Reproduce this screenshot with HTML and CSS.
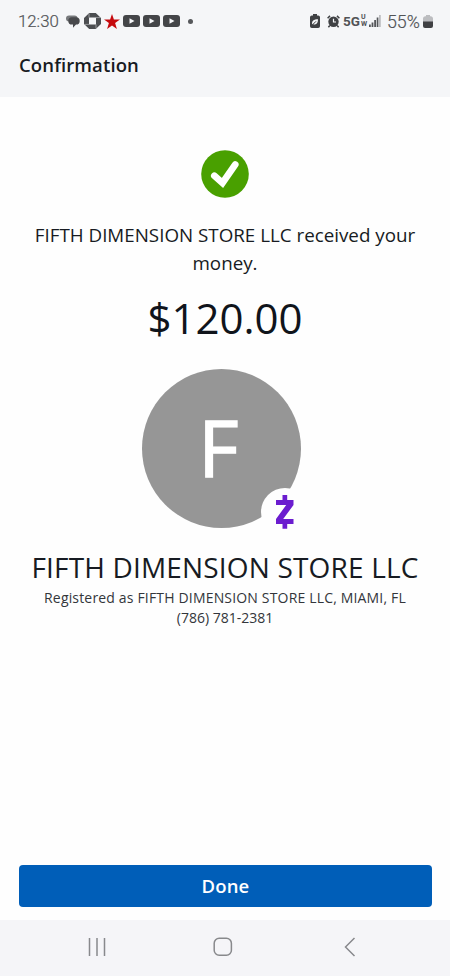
FILE: index.html
```html
<!DOCTYPE html>
<html lang="en">
<head>
<meta charset="utf-8">
<title>Confirmation</title>
<link rel="stylesheet" href="styles.css">
</head>
<body>
<div class="screen">
  <header class="header">
    <div class="status">
      <span class="time">12:30</span>
      <svg class="i-chat" width="14" height="13" viewBox="0 0 14 13"><rect x="0" y=".5" width="11.500" height="6" rx="3" fill="#77797c"/><path d="M6 2.200h4a3.700 3.700 0 0 1 0 7.400L7 12.800V9.600H6a3.700 3.700 0 0 1 0-7.400Z" fill="#48494c"/></svg>
      <svg class="i-bank" width="17" height="16" viewBox="0 0 17 16"><path d="M5.200 0h6.600L17 5v6l-5.200 5H5.200L0 11V5ZM5 4.600v6.800h7V4.600Z" fill="#4c4e51" fill-rule="evenodd"/><path d="M5 .5v4.100M12 4.600h4.500M12 11.400v4.100M.5 11.400H5" stroke="#b9babd" stroke-width=".7"/></svg>
      <svg class="i-star" width="16" height="15" viewBox="0 0 16 15"><path d="M8 0l1.900 5.500H16l-4.900 3.600L12.900 15 8 11.400 3.100 15l1.800-5.900L0 5.500h6.100Z" fill="#c50a0e"/></svg>
      <svg class="i-tube" width="17" height="12" viewBox="0 0 17 12"><rect width="17" height="12" rx="3" fill="#444548"/><path d="M6.500 3.300v5.400L11.500 6Z" fill="#f5f6f8"/></svg>
      <svg class="i-tube" width="17" height="12" viewBox="0 0 17 12"><rect width="17" height="12" rx="3" fill="#444548"/><path d="M6.500 3.300v5.400L11.500 6Z" fill="#f5f6f8"/></svg>
      <svg class="i-tube" width="17" height="12" viewBox="0 0 17 12"><rect width="17" height="12" rx="3" fill="#444548"/><path d="M6.500 3.300v5.400L11.500 6Z" fill="#f5f6f8"/></svg>
      <span class="dot"></span>
      <svg class="i-saver" width="10" height="14" viewBox="0 0 10 14"><path d="M3 0h4v1.500h1.200Q10 1.500 10 3.200v9Q10 14 8.200 14H1.800Q0 14 0 12.200v-9Q0 1.500 1.800 1.500H3Z" fill="#3f4144"/><path d="M2.300 10.500C1.200 7 4 5.200 8 5.200 8 9 6.500 11.200 3.300 10.200Z" fill="#f5f6f8"/><path d="M2 11.300 6 7.300" stroke="#3f4144"/></svg>
      <svg class="i-alarm" width="13" height="13" viewBox="0 0 13 13"><circle cx="6.500" cy="6.800" r="5.200" fill="#3f4144"/><path d="M.6 3.200 3 .9M12.400 3.200 10 .9M2.800 10.600 1.400 12.300M10.200 10.600l1.400 1.700" stroke="#3f4144" stroke-width="1.500"/><path d="M6.500 3.700v3.300H9" fill="none" stroke="#f5f6f8" stroke-width="1.200"/></svg>
      <span class="net">5G</span>
      <span class="uw"><span>U</span><span>W</span></span>
      <svg class="i-signal" width="12" height="12" viewBox="0 0 12 12"><path d="M0 9.500h1.800V12H0ZM2.600 7.500h1.800V12H2.600ZM5.200 5H7v7H5.200ZM7.700 2.500h1.700V12H7.700Z" fill="#55575a"/><path d="M10.100 0h1.600v12h-1.600Z" fill="#b5b6b9"/></svg>
      <span class="pct">55%</span>
      <svg class="i-batt" width="10" height="13" viewBox="0 0 10 13"><path d="M3 0h4v1.300h1Q10 1.500 10 3.500V7H0V3.500Q0 1.500 2 1.300h1Z" fill="#bcbdc0"/><path d="M0 6.500h10V11q0 2-2 2H2q-2 0-2-2Z" fill="#404144"/></svg>
    </div>
    <h1 class="title">Confirmation</h1>
  </header>
  <main class="content">
    <svg class="check" width="48" height="48" viewBox="0 0 48 48"><circle cx="24" cy="24" r="23.800" fill="#49a000"/><path d="M13.400 25.800 21.500 33 34.200 14.600" fill="none" stroke="#fff" stroke-width="6.800" stroke-linecap="round" stroke-linejoin="miter"/></svg>
    <p class="message">FIFTH DIMENSION STORE LLC received your<br>money.</p>
    <p class="amount">$120.00</p>
    <div class="avatar"><span class="initial">F</span>
      <span class="badge"><svg width="18" height="34" viewBox="0 0 18 34" fill="#6b1ccf"><path d="M6.500 0h4.700v5h6.300v5L7.200 24h10.300v5h-6.300v4.700H6.500V29H0v-5L10.200 10H0V5h6.500Z"/></svg></span>
    </div>
    <h2 class="name">FIFTH DIMENSION STORE LLC</h2>
    <p class="details"><span class="registered">Registered as FIFTH DIMENSION STORE LLC, MIAMI, FL</span><br><span class="phone">(786) 781-2381</span></p>
  </main>
  <button class="done">Done</button>
  <nav class="nav">
    <svg width="18" height="20" viewBox="0 0 18 20" stroke="#88898c" stroke-width="1.500"><path d="M1.500 1v18M9 1v18M16.500 1v18"/></svg>
    <svg class="home" width="20" height="20" viewBox="0 0 20 20" fill="none" stroke="#88898c" stroke-width="1.500"><rect x="1.200" y="1.200" width="17.200" height="17" rx="5"/></svg>
    <svg width="12" height="20" viewBox="0 0 12 20" fill="none" stroke="#88898c" stroke-width="1.500"><path d="M10.500 1 1.500 10l9 9"/></svg>
  </nav>
</div>
</body>
</html>
```
FILE: styles.css
```css
* { box-sizing: border-box; }
body { margin: 0; background: #fff; color: #171b22; font-family: "Open Sans", "Noto Sans", sans-serif; }
h1, h2, p { margin: 0; font-weight: 400; white-space: nowrap; }
svg { display: block; flex: none; }
.screen { width: 450px; height: 976px; display: flex; flex-direction: column; background: #fefefe; }
.header { height: 97px; flex: none; background: #f5f6f8; }
.status { display: flex; align-items: center; height: 42px; padding-left: 18px; font-family: Roboto, sans-serif; color: #515356; }
.time { width: 41px; font-size: 16.800px; font-weight: 300; -webkit-text-stroke: 0.200px #515356; }
.i-chat { margin-left: 7px; }
.i-bank { margin-left: 4px; }
.i-star { margin: 0 3px 0 3px; }
.i-tube { margin-right: 3px; }
.dot { width: 5px; height: 5px; margin-left: 5px; border-radius: 50%; background: #55575a; }
.i-saver { margin-left: 117px; }
.i-alarm { margin-left: 7px; }
.net { width: 18px; margin-left: 3px; font-size: 13.500px; font-weight: 700; }
.uw { display: flex; flex-direction: column; width: 7px; font-size: 7px; line-height: 7px; font-weight: 700; }
.i-signal { margin-left: 1px; }
.pct { width: 35px; margin-left: 6px; font-size: 17.800px; font-weight: 300; -webkit-text-stroke: 0.200px #515356; }
.i-batt { margin-left: 1px; }
.title { padding: 10px 19px 0; font-size: 18.500px; line-height: 25px; font-weight: 600; letter-spacing: 0.120px; }
.content { flex: 1; display: flex; flex-direction: column; align-items: center; padding-top: 53px; }
.message { margin-top: 23px; font-size: 18.800px; line-height: 28px; text-align: center; }
.amount { margin-top: 12px; font-size: 42px; line-height: 58px; color: #10141b; }
.avatar { position: relative; display: flex; align-items: center; justify-content: center; width: 159px; height: 159px; margin: 22px 8px 0 0; border-radius: 50%; background: #969696; color: #fff; }
.initial { padding: 0 5px 4px 0; font-size: 78px; line-height: 80px; -webkit-text-stroke: 1.500px #fff; }
.badge { position: absolute; left: 119px; top: 119px; width: 48px; height: 48px; display: flex; align-items: center; justify-content: center; border-radius: 50%; background: #fefefe; }
.name { margin-top: 20px; font-size: 28px; line-height: 38px; letter-spacing: 0.170px; }
.details { margin-top: 2px; font-size: 14px; line-height: 20px; text-align: center; color: #33363b; }
.registered { letter-spacing: 0.170px; }
.done { height: 42px; margin: 0 18px 13px 19px; padding: 0; border: 0; border-radius: 4px; background: #005eb8; color: #fff; font: 600 18.500px/42px "Open Sans", sans-serif; letter-spacing: 0.150px; }
.nav { height: 56px; flex: none; display: flex; align-items: center; justify-content: space-between; padding: 0 94px 2px 88px; background: #f5f5f8; }
.home { margin-right: 4px; }
```
